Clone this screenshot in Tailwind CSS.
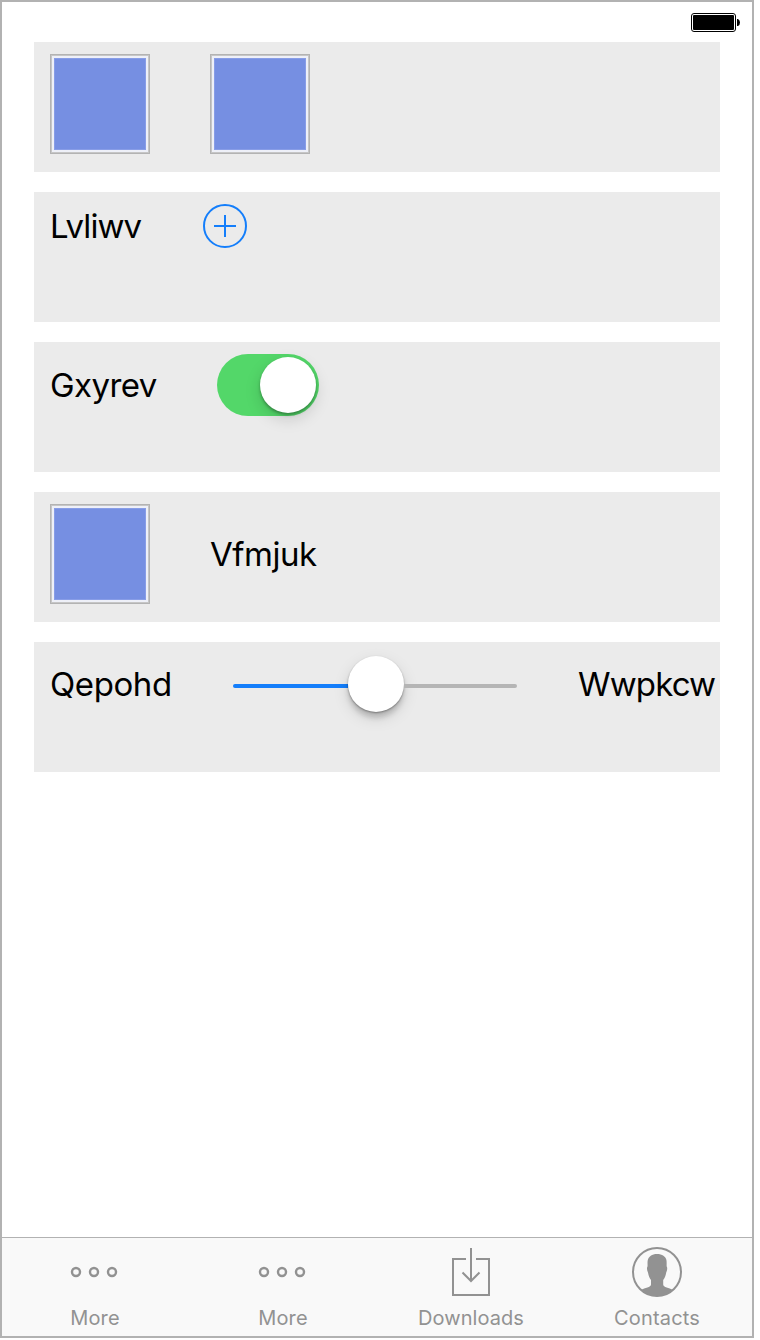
<!DOCTYPE html>
<html lang="en">
<head>
<meta charset="utf-8">
<title>Form</title>
<script src="https://cdn.jsdelivr.net/npm/@tailwindcss/browser@4"></script>
</head>
<body class="bg-white font-['Inter',sans-serif] text-black">
<div class="w-[754px] h-[1338px] border-2 border-[#b2b2b2] flex flex-col overflow-hidden">
  <header class="h-10 shrink-0 flex justify-end pt-[11px] pr-3">
    <svg class="w-[49px] h-[19px]" viewBox="0 0 49 19">
      <rect x=".5" y=".5" width="44" height="18" rx="2.5" fill="#fff" stroke="#000"/>
      <rect x="2" y="2" width="41" height="15" rx="1" fill="#000"/>
      <path d="M46 6h1q2 1 2 3.500t-2 3.500h-1z" fill="#000"/>
    </svg>
  </header>
  <main class="flex-1 flex flex-col gap-5 pl-8 pr-8">
    <section class="w-[686px] h-[130px] bg-[#ebebeb] pl-4 pt-3 flex gap-[60px]">
      <div class="size-[100px] border border-[#b3b3b3] bg-[#c6c6c6] p-px"><div class="size-full bg-[#eef0f8] p-[2px]"><div class="size-full bg-[#768fe2] border border-[#889de7]"></div></div></div>
      <div class="size-[100px] border border-[#b3b3b3] bg-[#c6c6c6] p-px"><div class="size-full bg-[#eef0f8] p-[2px]"><div class="size-full bg-[#768fe2] border border-[#889de7]"></div></div></div>
    </section>
    <section class="w-[686px] h-[130px] bg-[#ebebeb] pl-4 pt-3 flex items-start">
      <div class="w-[153px] h-11 leading-[44px] text-[33px] tracking-[-0.9px] whitespace-nowrap"><span>Lvliwv</span></div>
      <svg class="size-11" viewBox="0 0 44 44" fill="none" stroke="#147efb" stroke-width="2"><circle cx="22" cy="22" r="21"/><path d="M11 22h22M22 11v22"/></svg>
    </section>
    <section class="w-[686px] h-[130px] bg-[#ebebeb] pl-4 pt-3 flex items-start">
      <div class="w-[167px] h-[62px] leading-[62px] text-[33px] tracking-[-0.6px] whitespace-nowrap"><span>Gxyrev</span></div>
      <div class="w-[102px] h-[62px] rounded-full bg-[#53d769] flex justify-end pt-[3px] pr-[3px]">
        <div class="size-14 rounded-full bg-white shadow-[0_6px_16px_rgba(0,0,0,0.15),0_2px_3px_rgba(0,0,0,0.3)]"></div>
      </div>
    </section>
    <section class="w-[686px] h-[130px] bg-[#ebebeb] pl-4 pt-3 flex items-start gap-[60px]">
      <div class="size-[100px] border border-[#b3b3b3] bg-[#c6c6c6] p-px"><div class="size-full bg-[#eef0f8] p-[2px]"><div class="size-full bg-[#768fe2] border border-[#889de7]"></div></div></div>
      <div class="h-[100px] leading-[100px] text-[33px] tracking-[-0.5px] whitespace-nowrap"><span>Vfmjuk</span></div>
    </section>
    <section class="w-[686px] h-[130px] bg-[#ebebeb] pl-4 pt-3 flex items-start">
      <div class="w-[183px] h-[60px] leading-[60px] text-[33px] tracking-[-0.4px] whitespace-nowrap"><span>Qepohd</span></div>
      <div class="w-[284px] h-[60px] flex items-start">
        <div class="w-[115px] h-1 mt-[30px] rounded-l-full bg-[#147efb]"></div>
        <div class="size-14 mt-[2px] shrink-0 rounded-full bg-white shadow-[0_6px_16px_rgba(0,0,0,0.13),0_6px_5px_rgba(0,0,0,0.15),0_1px_2px_rgba(0,0,0,0.35)]"></div>
        <div class="w-[113px] h-1 mt-[30px] rounded-r-full bg-[#b5b5b5]"></div>
      </div>
      <div class="ml-[61px] h-[60px] leading-[60px] text-[33px] tracking-[-0.85px] whitespace-nowrap"><span>Wwpkcw</span></div>
    </section>
  </main>
  <nav class="h-[99px] shrink-0 border-t border-[#b2b2b2] bg-[#f9f9f9] grid grid-cols-[186px_190px_186px_186px] text-[#929292] text-[20px] leading-6">
    <div class="flex flex-col items-center pt-2">
      <svg class="w-[52px] h-[52px]" viewBox="0 0 52 52" fill="none" stroke="#929292" stroke-width="2.400"><circle cx="7" cy="26" r="4"/><circle cx="25" cy="26" r="4"/><circle cx="43" cy="26" r="4"/></svg>
      <span class="mt-2 tracking-[0.1px]">More</span>
    </div>
    <div class="flex flex-col items-center pt-2">
      <svg class="w-[52px] h-[52px]" viewBox="0 0 52 52" fill="none" stroke="#929292" stroke-width="2.400"><circle cx="7" cy="26" r="4"/><circle cx="25" cy="26" r="4"/><circle cx="43" cy="26" r="4"/></svg>
      <span class="mt-2 tracking-[0.1px]">More</span>
    </div>
    <div class="flex flex-col items-center pt-2">
      <svg class="w-[52px] h-[52px]" viewBox="0 0 52 52" fill="none" stroke="#929292" stroke-width="2"><path d="M21 13H8v36h36V13H31M26 2v33M17.500 26.500L26 35l8.500-8.500"/></svg>
      <span class="mt-2 tracking-[0.05px]">Downloads</span>
    </div>
    <div class="flex flex-col items-center pt-2">
      <svg class="w-[52px] h-[52px]" viewBox="0 0 52 52"><circle cx="26" cy="26" r="24" fill="none" stroke="#929292" stroke-width="2"/><path fill="#929292" d="M26 8c5 0 9 2.500 9.500 6.500.3 2 0 4.500.2 6 .8.800.7 3.500-.5 6-.5 3-1.500 5.500-3 7.500v4.500c0 3 6 3.200 9.800 5.500a24.500 24.500 0 0 1-32 0c3.800-2.300 10-2.500 10-5.500V34c-1.500-2-2.500-4.500-3-7.500-1.200-2.500-1.300-5.200-.5-6 .2-1.500-.2-4 .2-6C17.500 10.500 21 8 26 8z"/></svg>
      <span class="mt-2 tracking-[0.2px]">Contacts</span>
    </div>
  </nav>
</div>
</body>
</html>
